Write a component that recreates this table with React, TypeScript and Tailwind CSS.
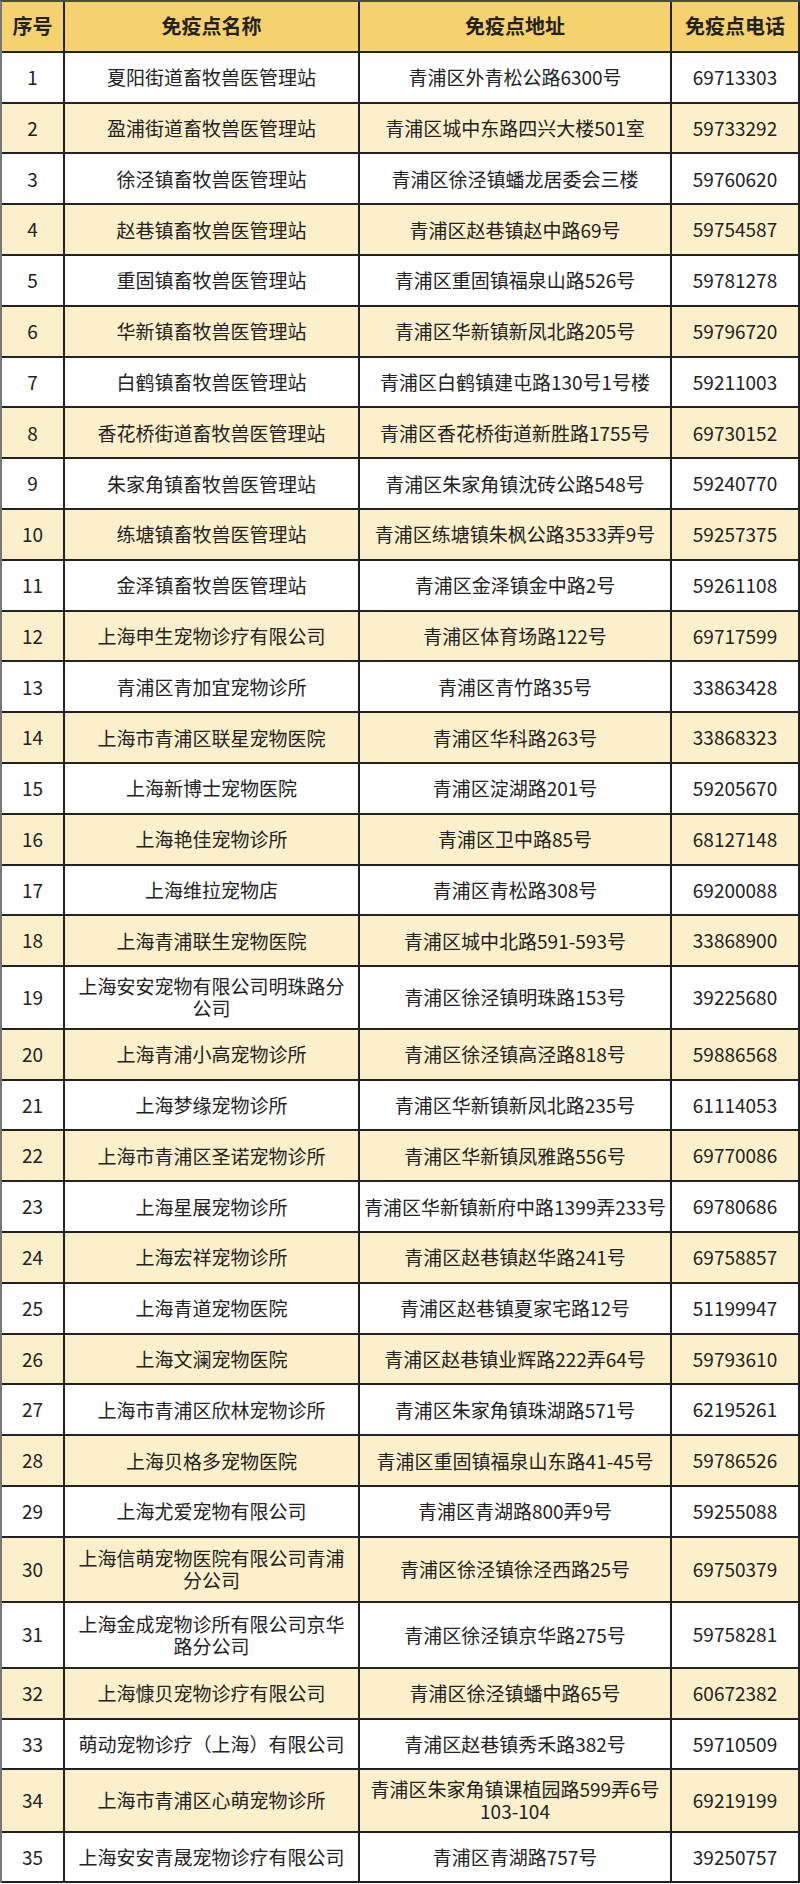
import React from 'react';

type Row = {
  no: number;
  name: string[];
  addr: string[];
  phone: string;
  h?: string;
};

const rows: Row[] = [
  { no: 1, name: ['夏阳街道畜牧兽医管理站'], addr: ['青浦区外青松公路6300号'], phone: '69713303' },
  { no: 2, name: ['盈浦街道畜牧兽医管理站'], addr: ['青浦区城中东路四兴大楼501室'], phone: '59733292' },
  { no: 3, name: ['徐泾镇畜牧兽医管理站'], addr: ['青浦区徐泾镇蟠龙居委会三楼'], phone: '59760620' },
  { no: 4, name: ['赵巷镇畜牧兽医管理站'], addr: ['青浦区赵巷镇赵中路69号'], phone: '59754587' },
  { no: 5, name: ['重固镇畜牧兽医管理站'], addr: ['青浦区重固镇福泉山路526号'], phone: '59781278' },
  { no: 6, name: ['华新镇畜牧兽医管理站'], addr: ['青浦区华新镇新凤北路205号'], phone: '59796720' },
  { no: 7, name: ['白鹤镇畜牧兽医管理站'], addr: ['青浦区白鹤镇建屯路130号1号楼'], phone: '59211003' },
  { no: 8, name: ['香花桥街道畜牧兽医管理站'], addr: ['青浦区香花桥街道新胜路1755号'], phone: '69730152' },
  { no: 9, name: ['朱家角镇畜牧兽医管理站'], addr: ['青浦区朱家角镇沈砖公路548号'], phone: '59240770' },
  { no: 10, name: ['练塘镇畜牧兽医管理站'], addr: ['青浦区练塘镇朱枫公路3533弄9号'], phone: '59257375' },
  { no: 11, name: ['金泽镇畜牧兽医管理站'], addr: ['青浦区金泽镇金中路2号'], phone: '59261108' },
  { no: 12, name: ['上海申生宠物诊疗有限公司'], addr: ['青浦区体育场路122号'], phone: '69717599' },
  { no: 13, name: ['青浦区青加宜宠物诊所'], addr: ['青浦区青竹路35号'], phone: '33863428' },
  { no: 14, name: ['上海市青浦区联星宠物医院'], addr: ['青浦区华科路263号'], phone: '33868323' },
  { no: 15, name: ['上海新博士宠物医院'], addr: ['青浦区淀湖路201号'], phone: '59205670' },
  { no: 16, name: ['上海艳佳宠物诊所'], addr: ['青浦区卫中路85号'], phone: '68127148' },
  { no: 17, name: ['上海维拉宠物店'], addr: ['青浦区青松路308号'], phone: '69200088' },
  { no: 18, name: ['上海青浦联生宠物医院'], addr: ['青浦区城中北路591-593号'], phone: '33868900' },
  { no: 19, name: ['上海安安宠物有限公司明珠路分', '公司'], addr: ['青浦区徐泾镇明珠路153号'], phone: '39225680', h: 'h-[62.6px]' },
  { no: 20, name: ['上海青浦小高宠物诊所'], addr: ['青浦区徐泾镇高泾路818号'], phone: '59886568' },
  { no: 21, name: ['上海梦缘宠物诊所'], addr: ['青浦区华新镇新凤北路235号'], phone: '61114053' },
  { no: 22, name: ['上海市青浦区圣诺宠物诊所'], addr: ['青浦区华新镇凤雅路556号'], phone: '69770086' },
  { no: 23, name: ['上海星展宠物诊所'], addr: ['青浦区华新镇新府中路1399弄233号'], phone: '69780686' },
  { no: 24, name: ['上海宏祥宠物诊所'], addr: ['青浦区赵巷镇赵华路241号'], phone: '69758857' },
  { no: 25, name: ['上海青道宠物医院'], addr: ['青浦区赵巷镇夏家宅路12号'], phone: '51199947' },
  { no: 26, name: ['上海文澜宠物医院'], addr: ['青浦区赵巷镇业辉路222弄64号'], phone: '59793610' },
  { no: 27, name: ['上海市青浦区欣林宠物诊所'], addr: ['青浦区朱家角镇珠湖路571号'], phone: '62195261' },
  { no: 28, name: ['上海贝格多宠物医院'], addr: ['青浦区重固镇福泉山东路41-45号'], phone: '59786526' },
  { no: 29, name: ['上海尤爱宠物有限公司'], addr: ['青浦区青湖路800弄9号'], phone: '59255088' },
  { no: 30, name: ['上海信萌宠物医院有限公司青浦', '分公司'], addr: ['青浦区徐泾镇徐泾西路25号'], phone: '69750379', h: 'h-[65px]' },
  { no: 31, name: ['上海金成宠物诊所有限公司京华', '路分公司'], addr: ['青浦区徐泾镇京华路275号'], phone: '59758281', h: 'h-[66px]' },
  { no: 32, name: ['上海慷贝宠物诊疗有限公司'], addr: ['青浦区徐泾镇蟠中路65号'], phone: '60672382' },
  { no: 33, name: ['萌动宠物诊疗（上海）有限公司'], addr: ['青浦区赵巷镇秀禾路382号'], phone: '59710509' },
  { no: 34, name: ['上海市青浦区心萌宠物诊所'], addr: ['青浦区朱家角镇课植园路599弄6号', '103-104'], phone: '69219199', h: 'h-[62.4px]' },
  { no: 35, name: ['上海安安青晟宠物诊疗有限公司'], addr: ['青浦区青湖路757号'], phone: '39250757' },
];

const cols = 'grid grid-cols-[63px_295px_312px_128px]';
const cell = 'flex flex-col items-center justify-center text-center border-r-2 border-[#222] whitespace-nowrap';

const Lines = ({ lines }: { lines: string[] }) => (
  <>
    {lines.map((l, i) => (
      <span key={i} className="leading-[22px]">
        {l}
      </span>
    ))}
  </>
);

export default function App() {
  return (
    <div
      className="w-[800px] bg-white border-t-2 border-l-2 border-t-[#4a4a4a] border-l-[#777] text-[#222]"
      style={{ fontFamily: '"Noto Sans CJK SC", "Noto Sans", sans-serif' }}
    >
      {/* header */}
      <div className={`${cols} h-[50.8px] bg-[#f6d26e] border-b-2 border-[#222] text-[20px] font-bold`}>
        <div className={cell}>序号</div>
        <div className={cell}>免疫点名称</div>
        <div className={cell}>免疫点地址</div>
        <div className={cell}>免疫点电话</div>
      </div>

      {rows.map((r) => (
        <div
          key={r.no}
          className={`${cols} ${r.h ?? 'h-[50.8px]'} ${
            r.no % 2 === 0 ? 'bg-[#fcefcb]' : 'bg-white'
          } border-b-2 border-[#222] text-[19px]`}
        >
          <div className={cell}>{r.no}</div>
          <div className={cell}>
            <Lines lines={r.name} />
          </div>
          <div className={cell}>
            <Lines lines={r.addr} />
          </div>
          <div className={cell}>{r.phone}</div>
        </div>
      ))}
    </div>
  );
}
